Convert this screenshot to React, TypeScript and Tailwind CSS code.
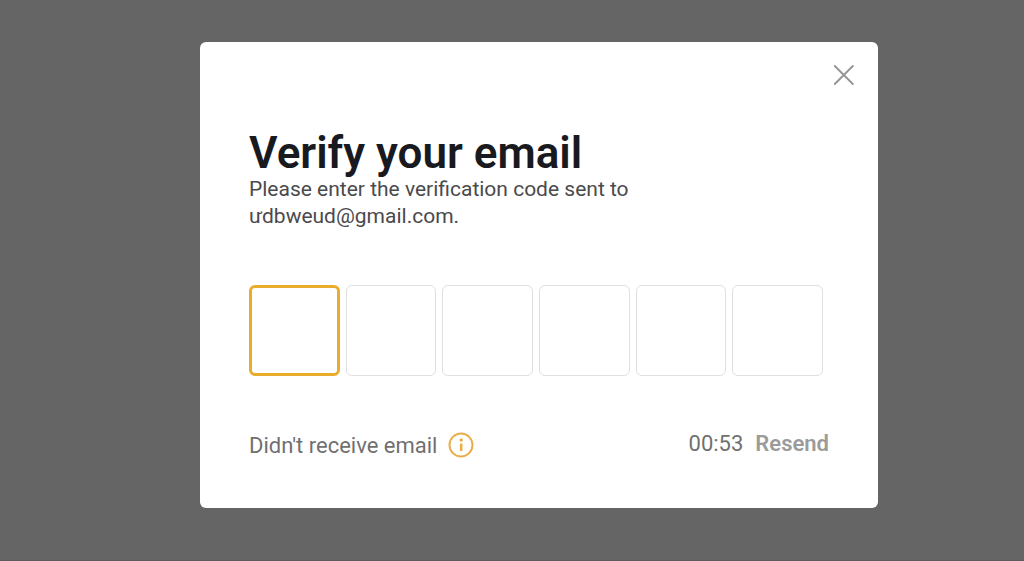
import { useRef, useState } from "react";

const CODE_LENGTH = 6;

function CloseIcon() {
  return (
    <svg viewBox="0 0 22 22" className="size-[22px]" fill="none" stroke="currentColor" strokeWidth="1.9" strokeLinecap="round" aria-hidden="true">
      <path d="M1.8 2L19.8 20M19.8 2L1.8 20" />
    </svg>
  );
}

function InfoIcon() {
  return (
    <svg viewBox="0 0 26 26" className="size-[26px]" fill="none" stroke="currentColor" aria-hidden="true">
      <circle cx="13" cy="13" r="11.5" strokeWidth="2" />
      <path d="M13.2 11.5V19" strokeWidth="2.6" />
      <circle cx="13.2" cy="8" r="1.7" fill="currentColor" stroke="none" />
    </svg>
  );
}

export default function App() {
  const [code, setCode] = useState<string[]>(Array(CODE_LENGTH).fill(""));
  const boxes = useRef<(HTMLInputElement | null)[]>([]);

  function enterDigit(index: number, value: string) {
    const digit = value.replace(/\D/g, "").slice(-1);
    setCode(code.map((old, i) => (i === index ? digit : old)));
    if (digit) boxes.current[index + 1]?.focus();
  }

  return (
    <main className="min-h-screen border-b border-[#5f5b5d] bg-[#656565] pt-[42px] pr-[146px] pb-[52px] pl-[200px] font-['Roboto','Liberation_Sans',sans-serif]">
      <section role="dialog" aria-labelledby="title" className="rounded-md bg-white pt-[22px] pb-[49px]">
        <div className="flex justify-end pr-[23px]">
          <button type="button" aria-label="Close" className="text-[#959595]">
            <CloseIcon />
          </button>
        </div>

        <form className="pt-11 pr-[49px] pl-[49px]">
          <h1 id="title" className="text-[44px] leading-[46px] font-semibold text-[#181a20]">
            Verify your email
          </h1>
          <p className="text-[21px] leading-[27px] text-[#4a4a4c]">
            Please enter the verification code sent to
            <br />
            ưdbweud@gmail.com.
          </p>

          <div className="grid grid-cols-6 gap-1.5 pt-[55px] pr-[6px]">
            {code.map((digit, i) => (
              <input
                key={i}
                ref={(el) => {
                  boxes.current[i] = el;
                }}
                aria-label={`Digit ${i + 1}`}
                inputMode="numeric"
                value={digit}
                onChange={(e) => enterDigit(i, e.target.value)}
                className="aspect-square w-full min-w-0 rounded-md border border-[#dfdfdf] text-center text-[44px] outline-none first:border-3 first:border-[#e9ad2c]"
              />
            ))}
          </div>

          <div className="flex items-start justify-between pt-14 text-[22px] leading-[27px] text-[#707070]">
            <div className="flex items-center gap-[11px]">
              <span>Didn't receive email</span>
              <button type="button" aria-label="Help with missing email" className="text-[#e9b04a]">
                <InfoIcon />
              </button>
            </div>
            <div className="flex items-center gap-3 leading-6">
              <span>00:53</span>
              <button type="button" className="font-semibold text-[#9b9b9b]">
                Resend
              </button>
            </div>
          </div>
        </form>
      </section>
    </main>
  );
}
